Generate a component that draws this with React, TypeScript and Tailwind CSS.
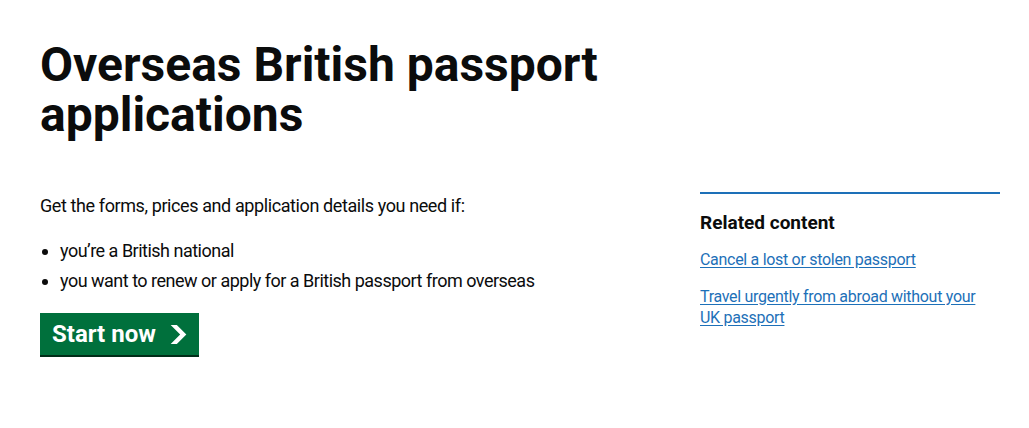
import React from "react";

export default function App() {
  return (
    <div className="min-h-[428px] w-full bg-white text-[#0b0c0c]" style={{ fontFamily: 'Roboto, Arial, sans-serif' }}>
      <div className="pl-[40px] pt-[40px] flex">
        <div className="w-[620px] shrink-0">
          <h1 className="text-[48px] leading-[50px] font-bold mb-[53px]">
            Overseas British passport applications
          </h1>
          <p className="text-[18px] leading-[25px] tracking-[-0.4px] mb-[20px]">
            Get the forms, prices and application details you need if:
          </p>
          <ul className="text-[18px] leading-[25px] tracking-[-0.5px] list-disc pl-[20px] mb-[20px]">
            <li className="mb-[5px]">you’re a British national</li>
            <li>you want to renew or apply for a British passport from overseas</li>
          </ul>
          <a
            href="#"
            className="inline-flex items-center gap-[14px] bg-[#00703c] text-white text-[24px] leading-[24px] font-bold px-[12px] pt-[9px] pb-[9px] shadow-[0_2px_0_#002d18]"
          >
            Start now
            <svg width="17" height="19" viewBox="0 0 33 40" aria-hidden="true">
              <path fill="currentColor" d="M0 0h13l20 20-20 20H0l20-20z" />
            </svg>
          </a>
        </div>
        <div className="ml-[40px] w-[300px] shrink-0 pt-[152px]">
          <div className="border-t-2 border-[#1d70b8] pt-[16px]">
            <h2 className="text-[19px] leading-[25px] font-bold mb-[14px]">Related content</h2>
            <ul className="text-[16px] leading-[21px] tracking-[-0.3px] max-w-[285px]">
              <li className="mb-[16px]">
                <a href="#" className="text-[#1d70b8] underline underline-offset-2">Cancel a lost or stolen passport</a>
              </li>
              <li>
                <a href="#" className="text-[#1d70b8] underline underline-offset-2">Travel urgently from abroad without your UK passport</a>
              </li>
            </ul>
          </div>
        </div>
      </div>
    </div>
  );
}
